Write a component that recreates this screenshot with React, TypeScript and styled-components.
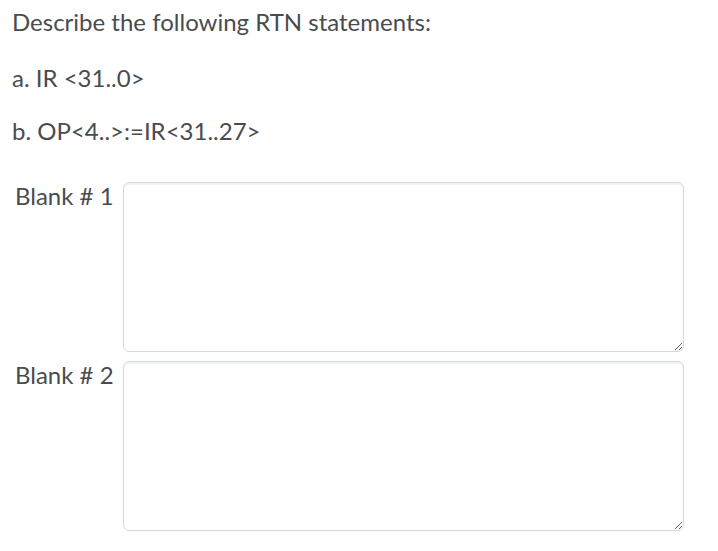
import React from "react";
import styled, { createGlobalStyle } from "styled-components";

const GlobalStyle = createGlobalStyle`
  html, body {
    margin: 0;
    padding: 0;
    background: #ffffff;
  }
  body {
    font-family: Lato, "Liberation Sans", sans-serif;
    color: #494c4e;
  }
`;

const Page = styled.div`
  padding: 6px 12px 0 12px;
  width: 718px;
  box-sizing: border-box;
`;

const Prompt = styled.p`
  margin: 0 0 24px 0;
  font-size: 24px;
  line-height: 32px;
`;

const Statement = styled.p`
  margin: 0 0 21px 0;
  font-size: 24px;
  line-height: 32px;
`;

const Blanks = styled.div`
  display: flex;
  flex-direction: column;
  gap: 9px;
  margin-top: 35px;
`;

const BlankRow = styled.div`
  display: flex;
  align-items: flex-start;
  gap: 10px;
`;

const BlankLabel = styled.label`
  width: 101px;
  flex-shrink: 0;
  padding: 0 0 0 3px;
  box-sizing: border-box;
  font-size: 24px;
  line-height: 28px;
  white-space: nowrap;
`;

const Answer = styled.textarea`
  width: 561px;
  height: 170px;
  box-sizing: border-box;
  border: 1px solid #d3d9e3;
  border-radius: 6px;
  background: #ffffff;
  box-shadow: inset 0 2px 0 rgba(185, 194, 208, 0.2);
  resize: vertical;
  outline: none;
  font-family: inherit;
  font-size: 18px;
  color: #494c4e;
  padding: 8px;
`;

export default function App() {
  return (
    <>
      <GlobalStyle />
      <Page>
        <Prompt>Describe the following RTN statements:</Prompt>
        <Statement>a. IR &lt;31..0&gt;</Statement>
        <Statement>b. OP&lt;4..&gt;:=IR&lt;31..27&gt;</Statement>
        <Blanks>
          {[1, 2].map((n) => (
            <BlankRow key={n}>
              <BlankLabel>Blank # {n}</BlankLabel>
              <Answer aria-label={`Blank # ${n}`} />
            </BlankRow>
          ))}
        </Blanks>
      </Page>
    </>
  );
}
